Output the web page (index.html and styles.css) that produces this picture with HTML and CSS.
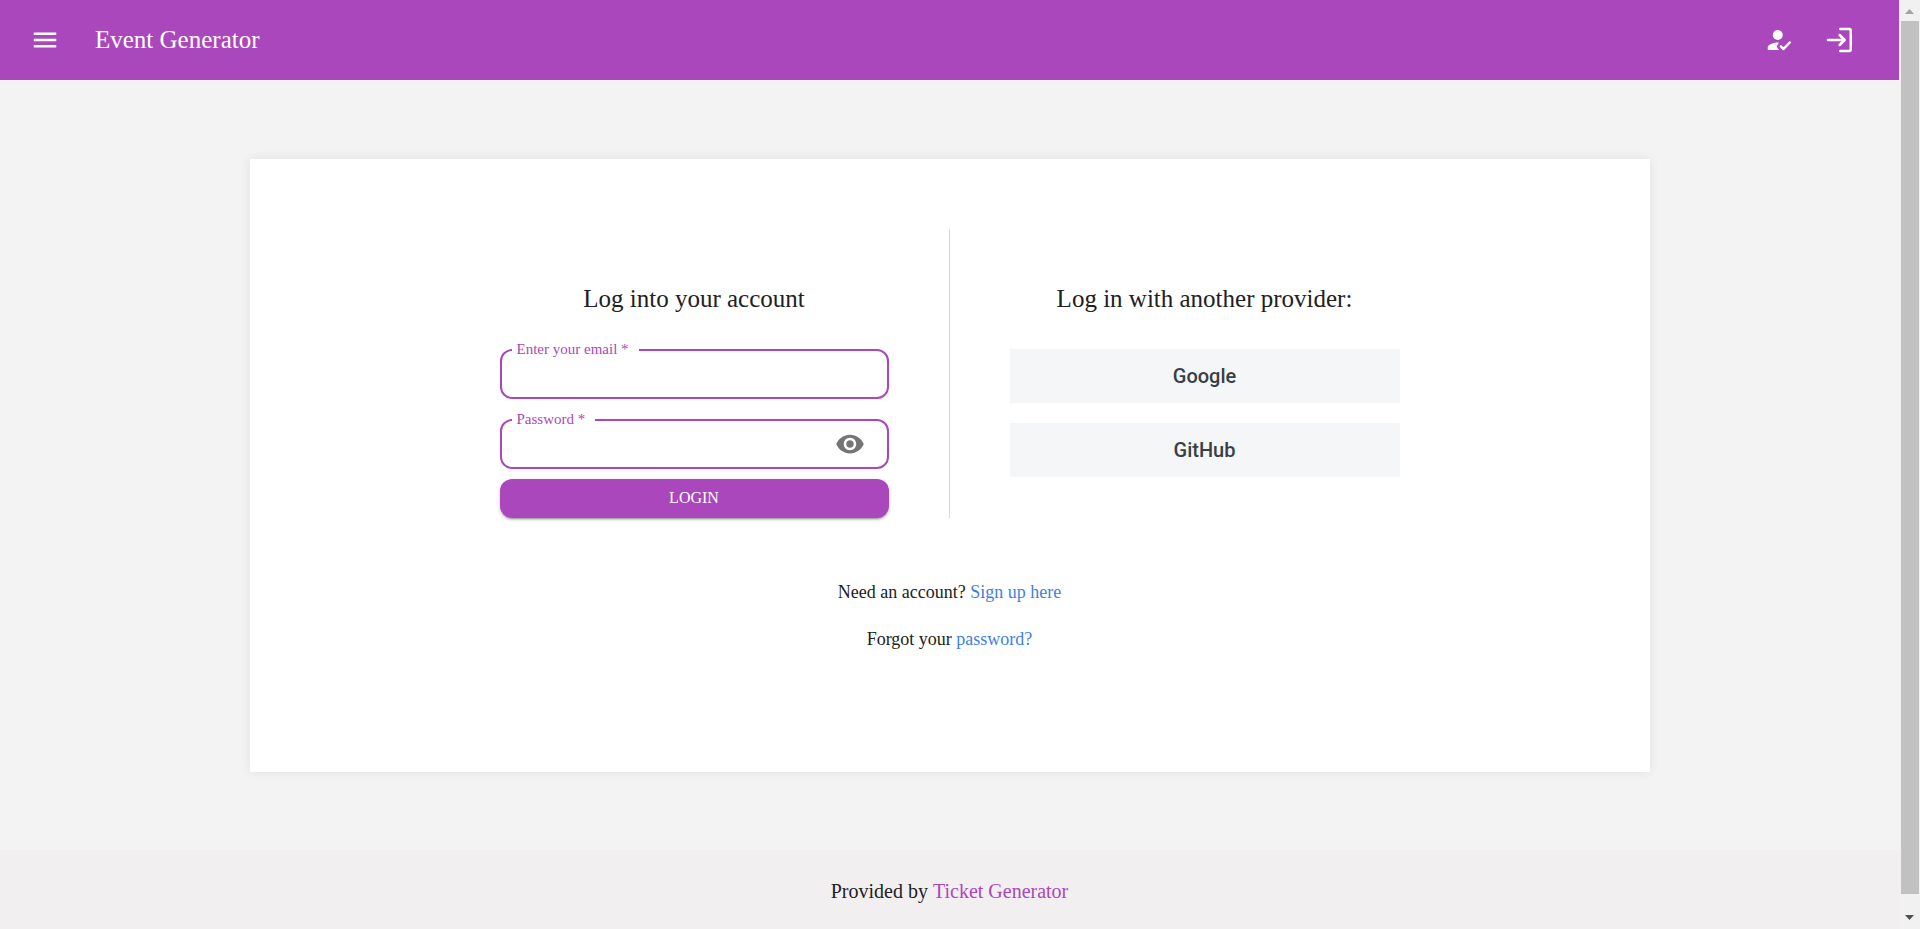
FILE: index.html
```html
<!DOCTYPE html>
<html lang="en">
<head>
<meta charset="utf-8">
<title>Event Generator</title>
<link rel="stylesheet" href="styles.css">
</head>
<body>
<div class="app">
  <header class="topbar">
    <button class="icon-button" type="button" aria-label="Menu">
      <svg class="icon" viewBox="0 0 24 24"><path d="M3 18h18v-2H3v2zm0-5h18v-2H3v2zm0-7v2h18V6H3z"/></svg>
    </button>
    <span class="brand">Event Generator</span>
    <nav class="actions">
      <button class="icon-button" type="button" aria-label="Sign up">
        <svg class="icon" viewBox="0 0 24 24"><circle cx="11" cy="8" r="4"/><path d="M12 14.05c-.35-.03-.7-.05-1-.05-2.670 0-8 1.340-8 4v2h9.200l-.8-.8a2.900 2.900 0 0 1 0-4.100z"/><path d="M13.500 17.100l2.100 2.100 5-5.200" fill="none" stroke="currentColor" stroke-width="2" stroke-linecap="round" stroke-linejoin="round"/></svg>
      </button>
      <button class="icon-button" type="button" aria-label="Log in">
        <svg class="icon" viewBox="0 0 24 24"><path d="M13 3.200h7.200a1.200 1.200 0 0 1 1.200 1.200v15.200a1.200 1.200 0 0 1-1.200 1.200H13M3.200 12h13M12.500 8l4 4-4 4" fill="none" stroke="currentColor" stroke-width="2" stroke-linecap="round" stroke-linejoin="round"/></svg>
      </button>
    </nav>
  </header>
  <main class="main">
    <section class="card">
      <div class="options">
        <form class="option option-account">
          <h1 class="heading">Log into your account</h1>
          <div class="field">
            <label class="field-label" for="email">Enter your email *</label>
            <input class="field-input" id="email" type="email">
          </div>
          <div class="field">
            <label class="field-label" for="password">Password *</label>
            <input class="field-input" id="password" type="password">
            <button class="reveal" type="button" aria-label="Show password">
              <svg class="icon" viewBox="0 0 24 24"><path d="M12 4.500C7 4.500 2.730 7.610 1 12c1.730 4.390 6 7.500 11 7.500s9.270-3.110 11-7.500c-1.730-4.390-6-7.500-11-7.500zM12 17c-2.760 0-5-2.240-5-5s2.240-5 5-5 5 2.240 5 5-2.240 5-5 5zm0-8c-1.660 0-3 1.340-3 3s1.340 3 3 3 3-1.340 3-3-1.340-3-3-3z"/></svg>
            </button>
          </div>
          <button class="login" type="button">LOGIN</button>
        </form>
        <div class="option">
          <h2 class="heading">Log in with another provider:</h2>
          <button class="provider" type="button">Google</button>
          <button class="provider" type="button">GitHub</button>
        </div>
      </div>
      <div class="help">
        <p class="help-line">Need an account? <a class="link" href="#">Sign up here</a></p>
        <p class="help-line">Forgot your <a class="link" href="#">password?</a></p>
      </div>
    </section>
  </main>
  <footer class="footer">Provided by&nbsp;<a class="footer-link" href="#">Ticket Generator</a></footer>
</div>
<div class="scrollbar" aria-hidden="true">
  <svg class="scroll-arrow" viewBox="0 0 21 21"><path d="M6 14h9L10.500 9z" fill="#a3a3a3"/></svg>
  <div class="scroll-thumb"></div>
  <svg class="scroll-arrow" viewBox="0 0 21 21"><path d="M6 7h9l-4.500 5z" fill="#505050"/></svg>
</div>
</body>
</html>
```
FILE: styles.css
```css
* {
  box-sizing: border-box;
}

body {
  margin: 0;
  min-height: 100vh;
  display: flex;
  background: #f3f3f3;
  color: #212121;
  font-family: "Liberation Serif", "Times New Roman", serif;
  font-size: 18px;
}

button,
input {
  font-family: inherit;
  border: 0;
  margin: 0;
}

.app {
  flex: 1;
  display: flex;
  flex-direction: column;
}

.icon {
  display: block;
  width: 30px;
  height: 30px;
  fill: currentColor;
}

.topbar {
  height: 80px;
  padding: 0 45px 0 30px;
  display: flex;
  align-items: center;
  gap: 35px;
  background: #ab47bc;
  color: #fff;
}

.icon-button {
  padding: 0;
  background: none;
  color: inherit;
}

.brand {
  font-size: 25px;
  line-height: 30px;
}

.actions {
  margin-left: auto;
  display: flex;
  gap: 30px;
}

.main {
  flex: 1;
  padding: 79px 40px;
  display: flex;
  justify-content: center;
  align-items: flex-start;
}

.card {
  width: 100%;
  max-width: 1400px;
  padding: 70px 20px 119px;
  background: #fff;
  box-shadow: 0 0 10px rgba(0, 0, 0, 0.08);
}

.options {
  max-width: 1020px;
  margin: 0 auto;
  display: grid;
  grid-template-columns: 1fr 1fr;
}

.option {
  padding: 55px 60px 0;
}

.option-account {
  border-right: 1px solid #dadada;
}

.heading {
  margin: 0 0 35px;
  font-size: 25px;
  font-weight: 400;
  line-height: 30px;
  text-align: center;
}

.field {
  position: relative;
  height: 50px;
  display: flex;
  align-items: center;
  border: 2px solid #ab47bc;
  border-radius: 12px;
}

.field + .field {
  margin-top: 20px;
}

.field-label {
  position: absolute;
  top: -12px;
  left: 10px;
  padding: 0 10px 0 5px;
  background: #fff;
  color: #ab47bc;
  font-size: 15px;
  line-height: 20px;
}

.field-input {
  flex: 1;
  min-width: 0;
  height: 40px;
  padding: 0 15px;
  background: none;
  font-size: 18px;
  outline: 0;
}

.reveal {
  margin-right: 22px;
  padding: 0;
  background: none;
  color: #757575;
}

.login {
  width: 100%;
  height: 39px;
  margin-top: 10px;
  padding: 0 0 2px;
  display: block;
  border-radius: 12px;
  background: #ab47bc;
  color: #fff;
  font-size: 16px;
  box-shadow: 0 3px 1px -2px rgba(0, 0, 0, 0.2), 0 2px 2px rgba(0, 0, 0, 0.14), 0 1px 5px rgba(0, 0, 0, 0.12);
}

.provider {
  width: 100%;
  height: 54px;
  display: block;
  background: #f4f6f8;
  color: #3a3f45;
  font-family: Roboto, sans-serif;
  font-size: 20px;
  font-weight: 500;
}

.provider + .provider {
  margin-top: 20px;
}

.help {
  margin-top: 61px;
  display: grid;
  gap: 20px;
  text-align: center;
}

.help-line {
  margin: 0;
  line-height: 27px;
}

.link {
  color: #3f7fdf;
  text-decoration: none;
}

.footer {
  height: 78px;
  padding-top: 2px;
  display: flex;
  align-items: center;
  justify-content: center;
  background: #f1eff0;
  font-size: 20px;
}

.footer-link {
  color: #ab47bc;
  text-decoration: none;
}

.scrollbar {
  width: 21px;
  display: flex;
  flex-direction: column;
  background: #f1f1f1;
}

.scroll-arrow {
  width: 21px;
  height: 21px;
}

.scroll-thumb {
  flex: 1;
  margin: 0 1px 14px 2px;
  background: #c1c1c1;
}
```
